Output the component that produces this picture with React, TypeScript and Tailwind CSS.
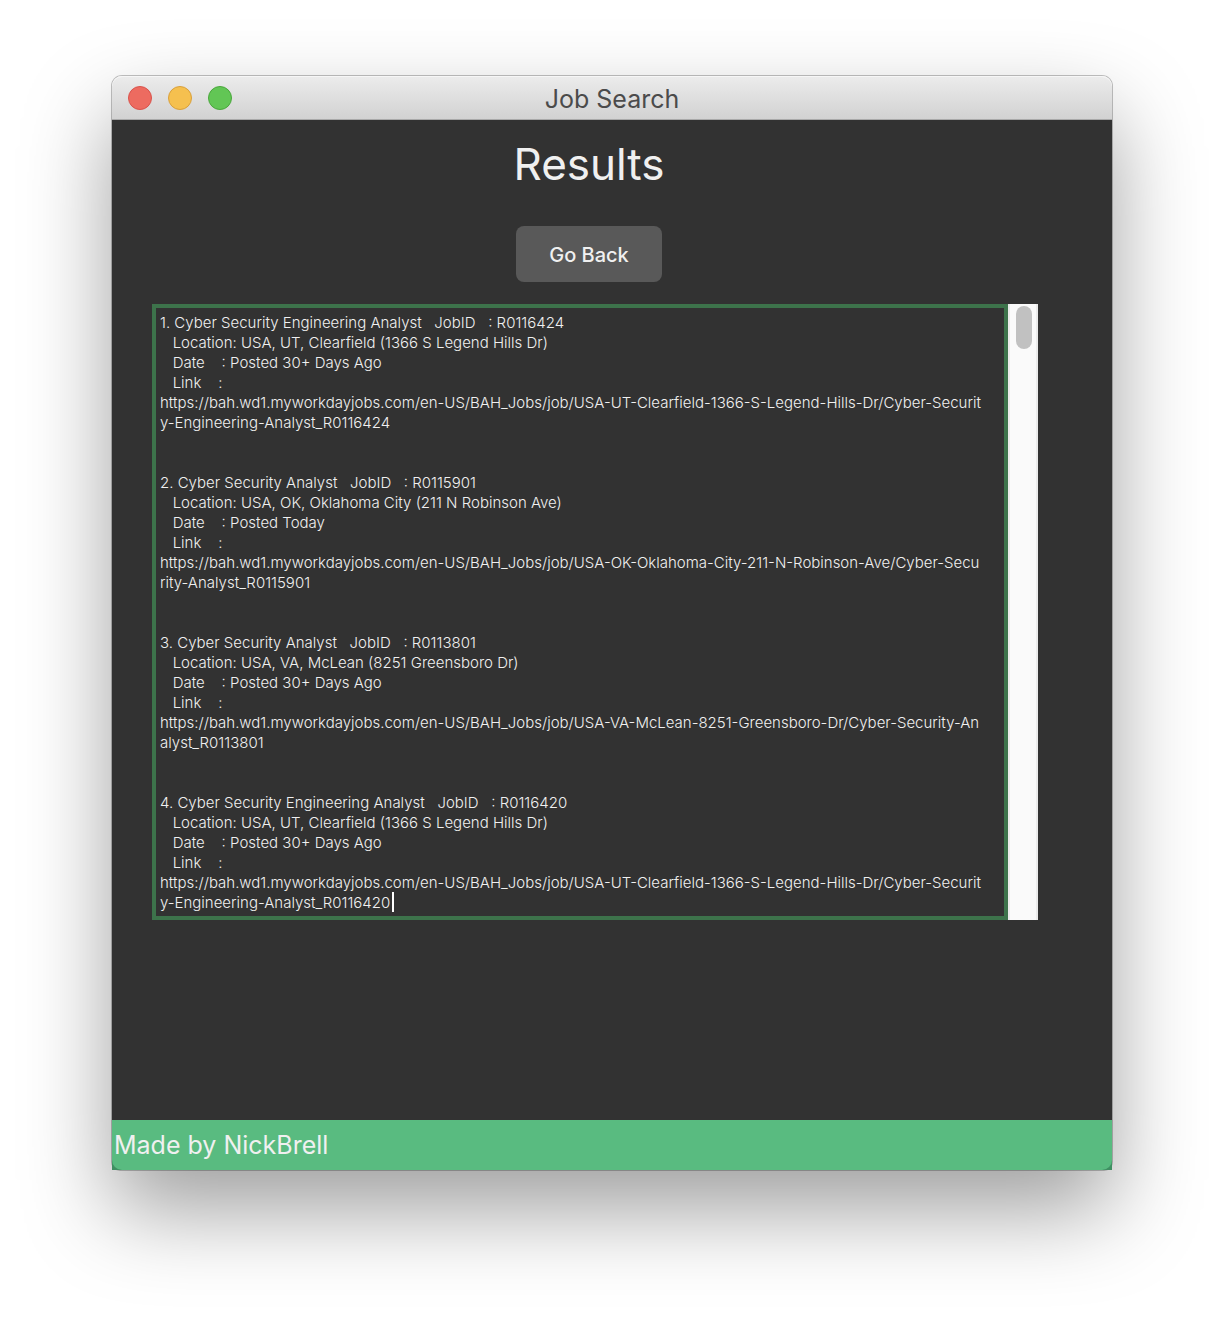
import React from "react";

type Job = { title: string; id: string; location: string; date: string; link: string[] };

const base = "https://bah.wd1.myworkdayjobs.com/en-US/BAH_Jobs/job/";

const jobs: Job[] = [
  {
    title: "Cyber Security Engineering Analyst",
    id: "R0116424",
    location: "USA, UT, Clearfield (1366 S Legend Hills Dr)",
    date: "Posted 30+ Days Ago",
    link: [base + "USA-UT-Clearfield-1366-S-Legend-Hills-Dr/Cyber-Securit", "y-Engineering-Analyst_R0116424"],
  },
  {
    title: "Cyber Security Analyst",
    id: "R0115901",
    location: "USA, OK, Oklahoma City (211 N Robinson Ave)",
    date: "Posted Today",
    link: [base + "USA-OK-Oklahoma-City-211-N-Robinson-Ave/Cyber-Secu", "rity-Analyst_R0115901"],
  },
  {
    title: "Cyber Security Analyst",
    id: "R0113801",
    location: "USA, VA, McLean (8251 Greensboro Dr)",
    date: "Posted 30+ Days Ago",
    link: [base + "USA-VA-McLean-8251-Greensboro-Dr/Cyber-Security-An", "alyst_R0113801"],
  },
  {
    title: "Cyber Security Engineering Analyst",
    id: "R0116420",
    location: "USA, UT, Clearfield (1366 S Legend Hills Dr)",
    date: "Posted 30+ Days Ago",
    link: [base + "USA-UT-Clearfield-1366-S-Legend-Hills-Dr/Cyber-Securit", "y-Engineering-Analyst_R0116420"],
  },
];

const results = jobs
  .map((job, i) =>
    [
      `${i + 1}. ${job.title}   JobID   : ${job.id}`,
      `   Location: ${job.location}`,
      `   Date    : ${job.date}`,
      "   Link    :",
      ...job.link,
    ].join("\n"),
  )
  .join("\n\n\n");

function TitleBar() {
  return (
    <header className="grid h-11 grid-cols-3 items-center rounded-t-[10px] border-b border-[#a9a9a9] bg-linear-to-b from-[#ececec] to-[#d2d2d2] px-4 shadow-[inset_0_1px_0_#f6f6f6]">
      <div className="flex gap-4">
        <button aria-label="Close" className="size-6 rounded-full border border-[#d9534c] bg-[#ed6b60]" />
        <button aria-label="Minimize" className="size-6 rounded-full border border-[#d9a03c] bg-[#f5c04f]" />
        <button aria-label="Zoom" className="size-6 rounded-full border border-[#4aa73c] bg-[#62c655]" />
      </div>
      <span className="pt-0.5 text-center text-[25px] leading-8 text-[#4b4b4b]">Job Search</span>
    </header>
  );
}

function ResultsBox() {
  return (
    <div className="mt-[22px] flex pr-[74px] pl-10">
      <div className="relative flex-1">
        <textarea
          aria-label="Job results"
          rows={30}
          wrap="off"
          spellCheck={false}
          defaultValue={results}
          className="block w-full resize-none overflow-hidden border-4 border-[#3d734b] bg-[#323232] px-1 pt-[5px] pb-[3px] text-[15px] leading-5 font-light text-[#f0f0f0] outline-none"
        />
        <span className="absolute bottom-2 left-60 h-5 w-0.5 bg-white" />
      </div>
      <div className="flex w-[30px] flex-col items-center border-x-2 border-[#ebebeb] bg-[#fafafa] pt-0.5 pl-0.5">
        <div className="h-[43px] w-4 rounded-full bg-[#c1c1c1]" />
      </div>
    </div>
  );
}

export default function App() {
  return (
    <div className="min-h-screen overflow-hidden bg-white px-28 pt-[76px] pb-[148px] font-['Inter',sans-serif]">
      <div className="rounded-t-[10px] rounded-b-lg shadow-[0_0_0_1px_rgba(0,0,0,0.24),0_40px_88px_rgba(0,0,0,0.38)]">
        <TitleBar />
        <main className="bg-[#323232] pb-[200px]">
          <div className="flex flex-col items-center pt-4 pr-[46px]">
            <h1 className="text-[44px] leading-[56px] text-[#f0f0f0]">Results</h1>
            <button className="mt-[34px] h-14 rounded-lg bg-[#595959] px-[33px] pt-0.5 text-[20px] font-medium text-[#f0f0f0]">
              Go Back
            </button>
          </div>
          <ResultsBox />
        </main>
        <footer className="bg-[#3f8f62]">
          <p className="rounded-b-[10px] bg-[#59bb80] px-0.5 py-1 text-[25px] leading-[42px] text-[#f0f0f0]">Made by NickBrell</p>
        </footer>
      </div>
    </div>
  );
}
